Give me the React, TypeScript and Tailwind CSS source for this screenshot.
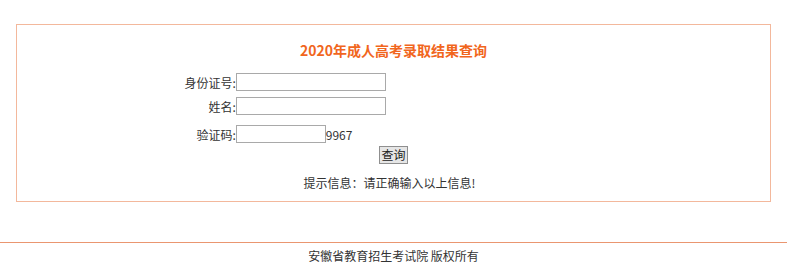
import React from "react";

const font = { fontFamily: '"Noto Sans CJK SC", "Microsoft YaHei", sans-serif' };

const Row = ({ label, children, className = "" }: { label: string; children: React.ReactNode; className?: string }) => (
  <div className={`flex items-end h-[18px] ${className}`}>
    <div className="w-[219px] text-right text-[12px] leading-[16px] text-[#333]">{label}</div>
    <div className="flex items-end">{children}</div>
  </div>
);

export default function App() {
  return (
    <div className="w-full bg-white pt-[24px] pb-[10px]" style={font}>
      <div className="mx-auto w-[96%] h-[178px] border border-[#f3b89c] flex flex-col">
        <h1 className="pt-[15px] h-[35px] text-center text-[14px] leading-[20px] font-bold text-[#f1661d]">
          2020年成人高考录取结果查询
        </h1>
        <div className="mt-[13px]">
          <Row label="身份证号:">
            <input className="w-[150px] h-[18px] border border-[#a9a9a9] bg-white outline-none" />
          </Row>
          <Row label="姓名:" className="mt-[6px]">
            <input className="w-[150px] h-[18px] border border-[#a9a9a9] bg-white outline-none" />
          </Row>
          <Row label="验证码:" className="mt-[10px]">
            <input className="w-[90px] h-[18px] border border-[#a9a9a9] bg-white outline-none" />
            <span className="text-[12px] leading-[16px] text-[#333]">9967</span>
          </Row>
        </div>
        <div className="mt-[3px] flex justify-center">
          <button className="h-[18px] px-[1px] border border-[#8f8f8f] bg-[#e6e6e6] text-[12px] leading-[16px] text-[#222]">
            查询
          </button>
        </div>
        <p className="mt-[11px] pr-[8px] text-center text-[12px] leading-[16px] text-[#333]">
          提示信息：请正确输入以上信息!
        </p>
      </div>
      <div className="mt-[40px] border-t border-[#ea9670] pt-[4px] text-center text-[12px] leading-[18px] text-[#333]">
        安徽省教育招生考试院 版权所有
      </div>
    </div>
  );
}
